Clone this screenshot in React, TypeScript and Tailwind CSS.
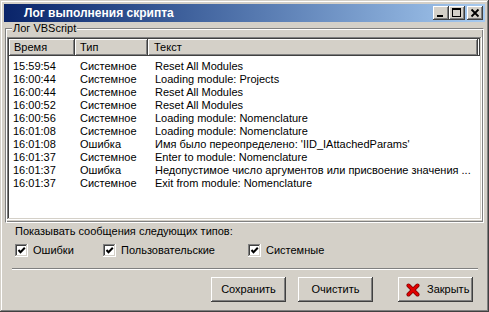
import React from 'react';

const raised =
  'shadow-[inset_-1px_-1px_0_#404040,inset_1px_1px_0_#ffffff,inset_-2px_-2px_0_#808080,inset_2px_2px_0_#d4d0c8]';
const sunken =
  'shadow-[inset_-1px_-1px_0_#ffffff,inset_1px_1px_0_#808080,inset_-2px_-2px_0_#d4d0c8,inset_2px_2px_0_#404040]';

const rows: [string, string, string][] = [
  ['15:59:54', 'Системное', 'Reset All Modules'],
  ['16:00:44', 'Системное', 'Loading module: Projects'],
  ['16:00:44', 'Системное', 'Reset All Modules'],
  ['16:00:52', 'Системное', 'Reset All Modules'],
  ['16:00:56', 'Системное', 'Loading module: Nomenclature'],
  ['16:01:08', 'Системное', 'Loading module: Nomenclature'],
  ['16:01:08', 'Ошибка', "Имя было переопределено: 'IID_IAttachedParams'"],
  ['16:01:37', 'Системное', 'Enter to module: Nomenclature'],
  ['16:01:37', 'Ошибка', 'Недопустимое число аргументов или присвоение значения ...'],
  ['16:01:37', 'Системное', 'Exit from module: Nomenclature'],
];

const CaptionButton: React.FC<{ kind: 'min' | 'max' | 'close' }> = ({ kind }) => (
  <div className={`w-[16px] h-[14px] bg-[#d4d0c8] ${raised}`}>
    <svg width="16" height="14" viewBox="0 0 16 14" shapeRendering="crispEdges">
      {kind === 'min' && <rect x="4" y="9" width="6" height="2" fill="#000" />}
      {kind === 'max' && (
        <g fill="#000">
          <rect x="3" y="2" width="9" height="2" />
          <rect x="3" y="2" width="1" height="9" />
          <rect x="11" y="2" width="1" height="9" />
          <rect x="3" y="10" width="9" height="1" />
        </g>
      )}
      {kind === 'close' && (
        <path d="M4.5 3.5 L11.5 10.5 M11.5 3.5 L4.5 10.5" stroke="#000" strokeWidth="1.8" shapeRendering="auto" />
      )}
    </svg>
  </div>
);

const CheckBox: React.FC<{ label: string; width?: string }> = ({ label, width }) => (
  <div className={`flex items-center ${width ?? ''}`}>
    <div className={`w-[13px] h-[13px] bg-white ${sunken} flex items-center justify-center`}>
      <svg width="9" height="9" viewBox="0 0 9 9">
        <path d="M1.5 4 L3.5 6.2 L7.8 1.8" stroke="#000" strokeWidth="2" fill="none" />
      </svg>
    </div>
    <span className="ml-[5px] leading-[13px]">{label}</span>
  </div>
);

const Button: React.FC<{ children: React.ReactNode; className?: string }> = ({ children, className }) => (
  <div
    className={`w-[75px] h-[25px] bg-[#d4d0c8] ${raised} flex items-center justify-center leading-[13px] ${className ?? ''}`}
  >
    {children}
  </div>
);

export default function App() {
  return (
    <div
      className="w-[489px] h-[312px] bg-[#d4d0c8] p-[4px] flex flex-col text-[11px] text-black font-['Liberation_Sans',Arial,sans-serif] shadow-[inset_-1px_-1px_0_#404040,inset_1px_1px_0_#d4d0c8,inset_-2px_-2px_0_#808080,inset_2px_2px_0_#ffffff]"
    >
      {/* title bar */}
      <div className="h-[18px] shrink-0 flex items-center bg-gradient-to-r from-[#0a246a] to-[#a6caf0] pl-[20px] pr-[2px]">
        <span className="flex-1 text-white font-bold text-[12px] leading-[14px]">Лог выполнения скрипта</span>
        <CaptionButton kind="min" />
        <CaptionButton kind="max" />
        <div className="w-[2px]" />
        <CaptionButton kind="close" />
      </div>

      {/* group box */}
      <div className="mt-[6px] ml-[1px] w-[479px] h-[195px] shrink-0 flex flex-col px-[1px] border border-t-[#808080] border-l-[#808080] border-r-white border-b-white shadow-[inset_1px_1px_0_#ffffff,inset_-1px_-1px_0_#808080]">
        <div className="-mt-[7px] ml-[5px] self-start px-[1px] bg-[#d4d0c8] leading-[13px]">Лог VBScript</div>
        <div className={`mt-[2px] h-[183px] bg-white p-[2px] flex flex-col ${sunken}`}>
          <div className="h-[17px] shrink-0 flex bg-[#d4d0c8]">
            <div className={`w-[66px] pl-[5px] leading-[17px] ${raised}`}>Время</div>
            <div className={`w-[73px] pl-[5px] leading-[17px] ${raised}`}>Тип</div>
            <div className={`w-[330px] pl-[6px] leading-[17px] ${raised}`}>Текст</div>
            <div className={`flex-1 ${raised}`} />
          </div>
          <div className="pt-[4px] flex flex-col">
            {rows.map(([time, type, text], i) => (
              <div key={i} className="flex h-[13px] leading-[13px] whitespace-nowrap">
                <div className="w-[66px] pl-[4px]">{time}</div>
                <div className="w-[73px] pl-[5px]">{type}</div>
                <div className="flex-1 pl-[7px] overflow-hidden">{text}</div>
              </div>
            ))}
          </div>
        </div>
      </div>

      {/* filters */}
      <div className="mt-[2px] ml-[11px] leading-[13px]">Показывать сообщения следующих типов:</div>
      <div className="mt-[6px] ml-[11px] flex">
        <CheckBox label="Ошибки" width="w-[88px]" />
        <CheckBox label="Пользовательские" width="w-[145px]" />
        <CheckBox label="Системные" />
      </div>

      <div className="mt-[11px] ml-[8px] w-[466px] h-[2px] border-t border-t-[#808080] border-b border-b-white" />

      {/* buttons */}
      <div className="mt-[7px] flex pl-[207px]">
        <Button>Сохранить</Button>
        <Button className="ml-[12px]">Очистить</Button>
        <Button className="ml-[25px] justify-start pl-[8px]">
          <svg width="14" height="14" viewBox="0 0 14 14" className="mr-[7px]">
            <path d="M2.5 2.5 L11.5 11.5 M11.5 2.5 L2.5 11.5" stroke="#7a0000" strokeWidth="4" strokeLinecap="round" />
            <path d="M2.5 2.5 L11.5 11.5 M11.5 2.5 L2.5 11.5" stroke="#e00000" strokeWidth="2.6" strokeLinecap="round" />
          </svg>
          Закрыть
        </Button>
      </div>
    </div>
  );
}
